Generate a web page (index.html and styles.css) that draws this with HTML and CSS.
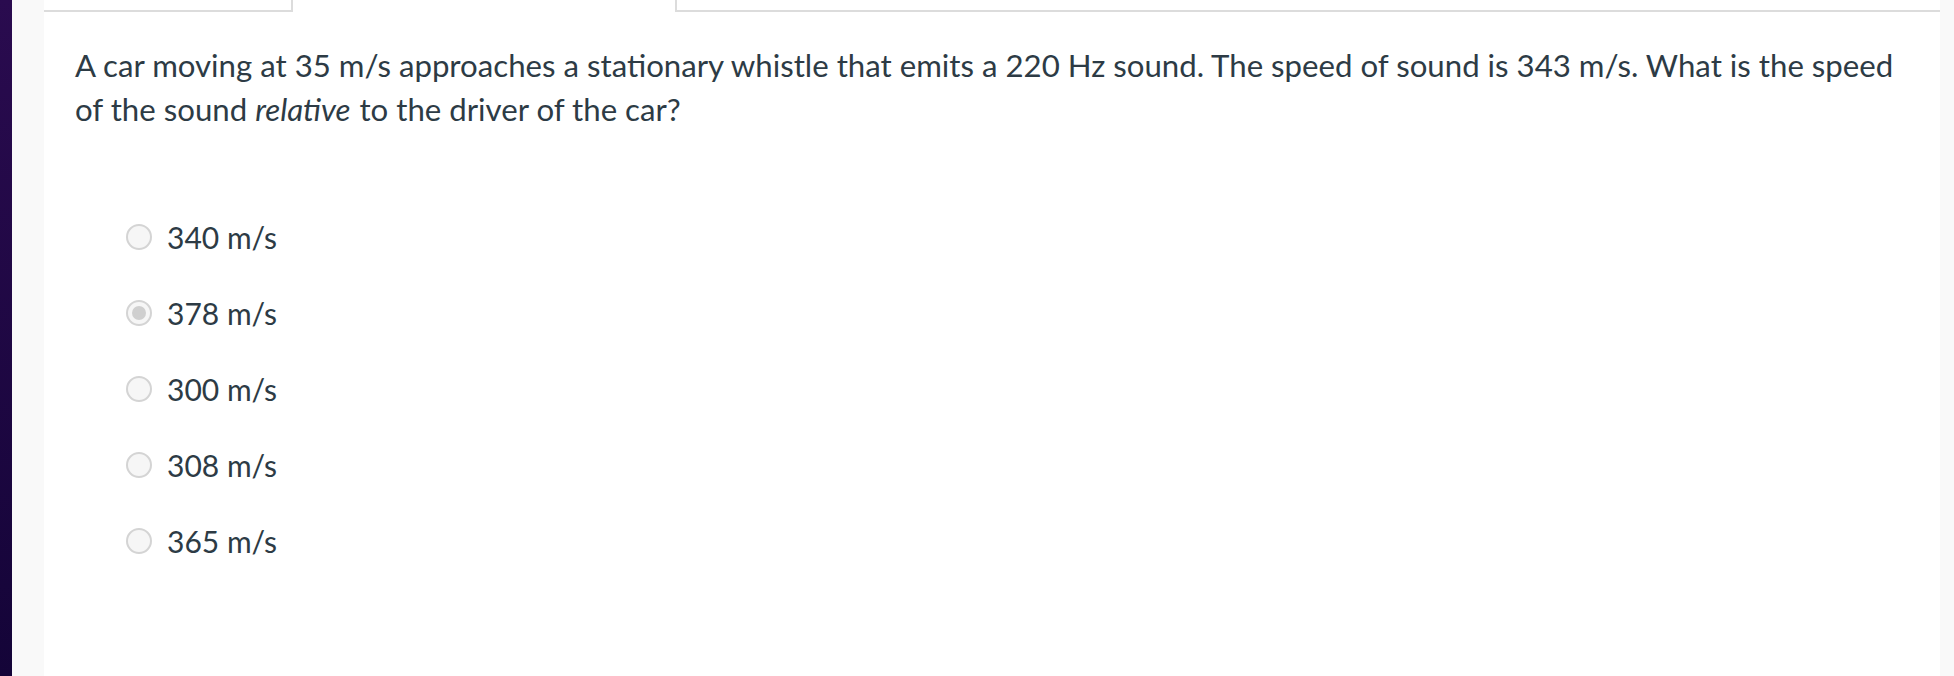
FILE: index.html
```html
<!DOCTYPE html>
<html lang="en">
<head>
<meta charset="utf-8">
<title>Quiz question</title>
<link rel="stylesheet" href="styles.css">
</head>
<body>
<div class="page">
  <div class="nav-strip"></div>
  <main class="main">
    <section class="card">
      <div class="tabs">
        <div class="tab tab-first"></div>
        <div class="tab tab-active"></div>
        <div class="tab tab-rest"></div>
      </div>
      <p class="question">A car moving at 35 m/s approaches a stationary whistle that emits a 220 Hz sound. The speed of sound is 343 m/s. What is the speed of the sound <em>relative</em> to the driver of the car?</p>
      <ul class="answers">
        <li class="answer"><span class="radio"></span><span class="label">340 m/s</span></li>
        <li class="answer"><span class="radio radio-checked"></span><span class="label">378 m/s</span></li>
        <li class="answer"><span class="radio"></span><span class="label">300 m/s</span></li>
        <li class="answer"><span class="radio"></span><span class="label">308 m/s</span></li>
        <li class="answer"><span class="radio"></span><span class="label">365 m/s</span></li>
      </ul>
    </section>
  </main>
</div>
</body>
</html>
```
FILE: styles.css
```css
html, body {
  margin: 0;
  padding: 0;
  height: 100%;
}
body {
  font-family: Lato, "Open Sans", "Liberation Sans", sans-serif;
  color: #2d3b45;
  background: #f9f9f9;
  overflow: hidden;
}
.page {
  display: flex;
  height: 676px;
}
.nav-strip {
  width: 12px;
  flex: 0 0 12px;
  background: linear-gradient(#2a0b4f, #140438);
}
.main {
  flex: 1;
  display: flex;
  padding: 0 14px 0 32px;
  background: #f9f9f9;
}
.card {
  flex: 1;
  background: #ffffff;
  padding: 0 31px;
}
.tabs {
  display: flex;
  height: 12px;
  margin: 0 -31px;
}
.tab {
  box-sizing: border-box;
  height: 12px;
}
.tab-first {
  width: 249px;
  border-right: 2px solid #dcdcdc;
  border-bottom: 2px solid #dcdcdc;
}
.tab-active {
  width: 382px;
}
.tab-rest {
  flex: 1;
  border-left: 2px solid #dcdcdc;
  border-bottom: 2px solid #dcdcdc;
}
.question {
  margin: 31px 0 0;
  font-size: 31.2px;
  line-height: 44px;
}
.question em {
  font-style: italic;
  padding-right: 1px;
}
.answers {
  list-style: none;
  margin: 68px 0 0;
  padding: 0 0 0 51px;
}
.answer {
  display: flex;
  align-items: center;
  height: 76px;
  font-size: 30px;
}
.radio {
  box-sizing: border-box;
  width: 26px;
  height: 26px;
  border-radius: 50%;
  border: 2px solid #d4d4d4;
  background: #f6f6f6;
  margin-right: 15px;
  display: flex;
  align-items: center;
  justify-content: center;
}
.radio-checked::after {
  content: "";
  width: 14px;
  height: 14px;
  border-radius: 50%;
  background: #cfcfcf;
}
```
